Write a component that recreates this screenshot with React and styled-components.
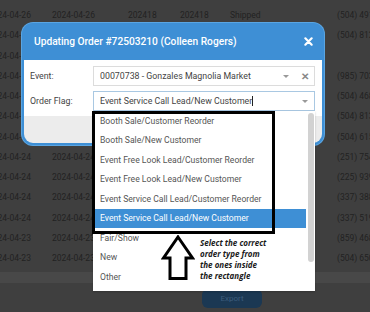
import React from "react";
import styled, { createGlobalStyle } from "styled-components";

const Global = createGlobalStyle`
  html, body { margin: 0; padding: 0; }
  body {
    width: 370px; height: 312px; overflow: hidden;
    background: #3f3f3f;
    font-family: Roboto, "Liberation Sans", sans-serif;
  }
`;

const Page = styled.div`
  position: relative;
  width: 370px;
  height: 312px;
  overflow: hidden;
  background: #3f3f3f;
`;

const Table = styled.div`
  padding-top: 5px;
  margin-left: -12px;
`;

const Row = styled.div`
  display: grid;
  grid-template-columns: 64px 76px 52px 50px 107px 1fr;
  height: 20.25px;
  align-items: center;
  font-size: 8.5px;
  color: #222;
  white-space: nowrap;
`;

const Band = styled.div`
  margin-top: 4px;
  height: 11px;
  background: #484848;
`;

const Footer = styled.div`
  padding: 6px 0 0 202px;
`;

const ExportButton = styled.div`
  width: 60px;
  height: 19px;
  border-radius: 6px;
  background: #1b3853;
  color: #3c5d7d;
  font-size: 8px;
  display: flex;
  align-items: center;
  justify-content: center;
`;

const Modal = styled.div`
  position: absolute;
  left: 22px;
  top: 23px;
  width: 302px;
  border-radius: 11px;
  background: #3e8fd5;
  box-shadow: 0 0 0 1px #5aa5e2;
`;

const Header = styled.div`
  height: 37px;
  display: flex;
  align-items: center;
  justify-content: space-between;
  padding: 0 11px 0 12px;
  color: #fff;
  font-size: 10.2px;
  font-weight: 500;
  border-radius: 11px 11px 0 0;
`;

const Body = styled.div`
  background: #fff;
  margin: 0 2px;
  padding: 6px 7px 5px 6px;
  display: flex;
  flex-direction: column;
  gap: 5px;
`;

const FooterBar = styled.div`
  background: #ececec;
  height: 27px;
  margin: 0 2px 2px;
  border-radius: 0 0 9px 9px;
`;

const Field = styled.div`
  display: flex;
  align-items: center;
`;

const Label = styled.div`
  width: 63px;
  font-size: 8.8px;
  color: #444;
`;

const InputWrap = styled.div`
  position: relative;
  flex: 1;
`;

const Input = styled.div`
  height: 18px;
  border: 1px solid ${(p) => (p.$focus ? "#a9c8e2" : "#dcdcdc")};
  display: flex;
  align-items: center;
  padding: 0 6px;
  font-size: 8.8px;
  color: #444;
  gap: 8px;
`;

const Value = styled.div`
  flex: 1;
  white-space: nowrap;
`;

const Caret = styled.span`
  display: inline-block;
  width: 0;
  height: 10px;
  border-left: 1px solid #222;
  vertical-align: middle;
`;

const Arrow = styled.span`
  width: 0; height: 0;
  border-left: 3px solid transparent;
  border-right: 3px solid transparent;
  border-top: 3px solid #999;
`;

const Clear = styled.span`
  color: #888;
  font-size: 10px;
  font-weight: 700;
  margin-left: 4px;
  margin-right: -1px;
`;

const Dropdown = styled.div`
  position: absolute;
  left: 0;
  right: 0;
  top: 100%;
  background: #fff;
  padding-bottom: 4px;
  display: flex;
  box-shadow: 0 1px 2px rgba(0,0,0,0.2);
`;

const List = styled.div`
  flex: 1;
`;

const Item = styled.div`
  height: 19.5px;
  display: flex;
  align-items: center;
  padding-left: 7px;
  font-size: 8.6px;
  color: ${(p) => (p.$active ? "#fff" : "#555")};
  background: ${(p) => (p.$active ? "#3e8fd5" : "transparent")};
  white-space: nowrap;
`;

const Track = styled.div`
  width: 9px;
  display: flex;
  justify-content: center;
  padding-top: 2px;
`;

const Thumb = styled.div`
  width: 6px;
  height: 149px;
  border-radius: 3px;
  background: #d2d2d2;
`;

const Rect = styled.div`
  position: absolute;
  left: 92px;
  top: 111px;
  width: 177px;
  height: 117px;
  border: 3px solid #000;
`;

const ArrowSvg = styled.svg`
  position: absolute;
  left: 161px;
  top: 235px;
`;

const Note = styled.div`
  position: absolute;
  left: 200px;
  top: 237px;
  font-family: "Open Sans", "Liberation Sans", sans-serif;
  font-style: italic;
  font-weight: 700;
  font-size: 8px;
  line-height: 11px;
  color: #1a1a1a;
`;

const Close = styled.svg`
  display: block;
`;

const rows = [
  ["2024-04-26", "2024-04-26", "202418", "202418", "Shipped", "(504) 491-2210"],
  ["2024-04-26", "", "", "", "", "(504) 812-4471"],
  ["2024-04-26", "", "", "", "", ""],
  ["2024-04-25", "", "", "", "", "(985) 703-1182"],
  ["2024-04-25", "", "", "", "", "(504) 468-2290"],
  ["2024-04-25", "", "", "", "", "(504) 813-5520"],
  ["2024-04-24", "2024-04-24", "", "", "", "(504) 615-0098"],
  ["2024-04-24", "2024-04-24", "", "", "", "(251) 754-3312"],
  ["2024-04-24", "2024-04-24", "", "", "", "(225) 939-4410"],
  ["2024-04-24", "2024-04-24", "", "", "", "(337) 388-1020"],
  ["2024-04-24", "2024-04-24", "", "", "", "(337) 519-7783"],
  ["2024-04-23", "2024-04-23", "", "", "", "(859) 468-2231"],
  ["2024-04-23", "2024-04-23", "", "", "", "(504) 650-9981"],
];

const options = [
  "Booth Sale/Customer Reorder",
  "Booth Sale/New Customer",
  "Event Free Look Lead/Customer Reorder",
  "Event Free Look Lead/New Customer",
  "Event Service Call Lead/Customer Reorder",
  "Event Service Call Lead/New Customer",
  "Fair/Show",
  "New",
  "Other",
];

export default function App() {
  return (
    <Page>
      <Global />
      <Table>
        {rows.map((r, i) => (
          <Row key={i}>
            {r.map((c, j) => (
              <span key={j}>{c}</span>
            ))}
          </Row>
        ))}
      </Table>
      <Band />
      <Footer>
        <ExportButton>Export</ExportButton>
      </Footer>

      <Modal>
        <Header>
          <span>Updating Order #72503210 (Colleen Rogers)</span>
          <Close width="9" height="9" viewBox="0 0 10 10">
            <path d="M1.5 1.5 L8.5 8.5 M8.5 1.5 L1.5 8.5" stroke="#fff" strokeWidth="2.4" strokeLinecap="round" />
          </Close>
        </Header>
        <Body>
          <Field>
            <Label>Event:</Label>
            <InputWrap>
              <Input>
                <Value>00070738 - Gonzales Magnolia Market</Value>
                <Arrow />
                <Clear>✕</Clear>
              </Input>
            </InputWrap>
          </Field>
          <Field>
            <Label>Order Flag:</Label>
            <InputWrap>
              <Input $focus>
                <Value>
                  Event Service Call Lead/New Customer<Caret />
                </Value>
                <Arrow />
              </Input>
              <Dropdown>
                <List>
                  {options.map((o) => (
                    <Item key={o} $active={o === "Event Service Call Lead/New Customer"}>
                      {o}
                    </Item>
                  ))}
                </List>
                <Track>
                  <Thumb />
                </Track>
              </Dropdown>
            </InputWrap>
          </Field>
        </Body>
        <FooterBar />
      </Modal>

      <Rect />
      <ArrowSvg width="34" height="46" viewBox="0 0 34 46">
        <path d="M17 2 L31.5 23 L25 23 L25 43.5 L9 43.5 L9 23 L2.5 23 Z" fill="#fff" stroke="#000" strokeWidth="3" strokeLinejoin="miter" />
      </ArrowSvg>
      <Note>
        Select the correct
        <br />
        order type from
        <br />
        the ones inside
        <br />
        the rectangle
      </Note>
    </Page>
  );
}
